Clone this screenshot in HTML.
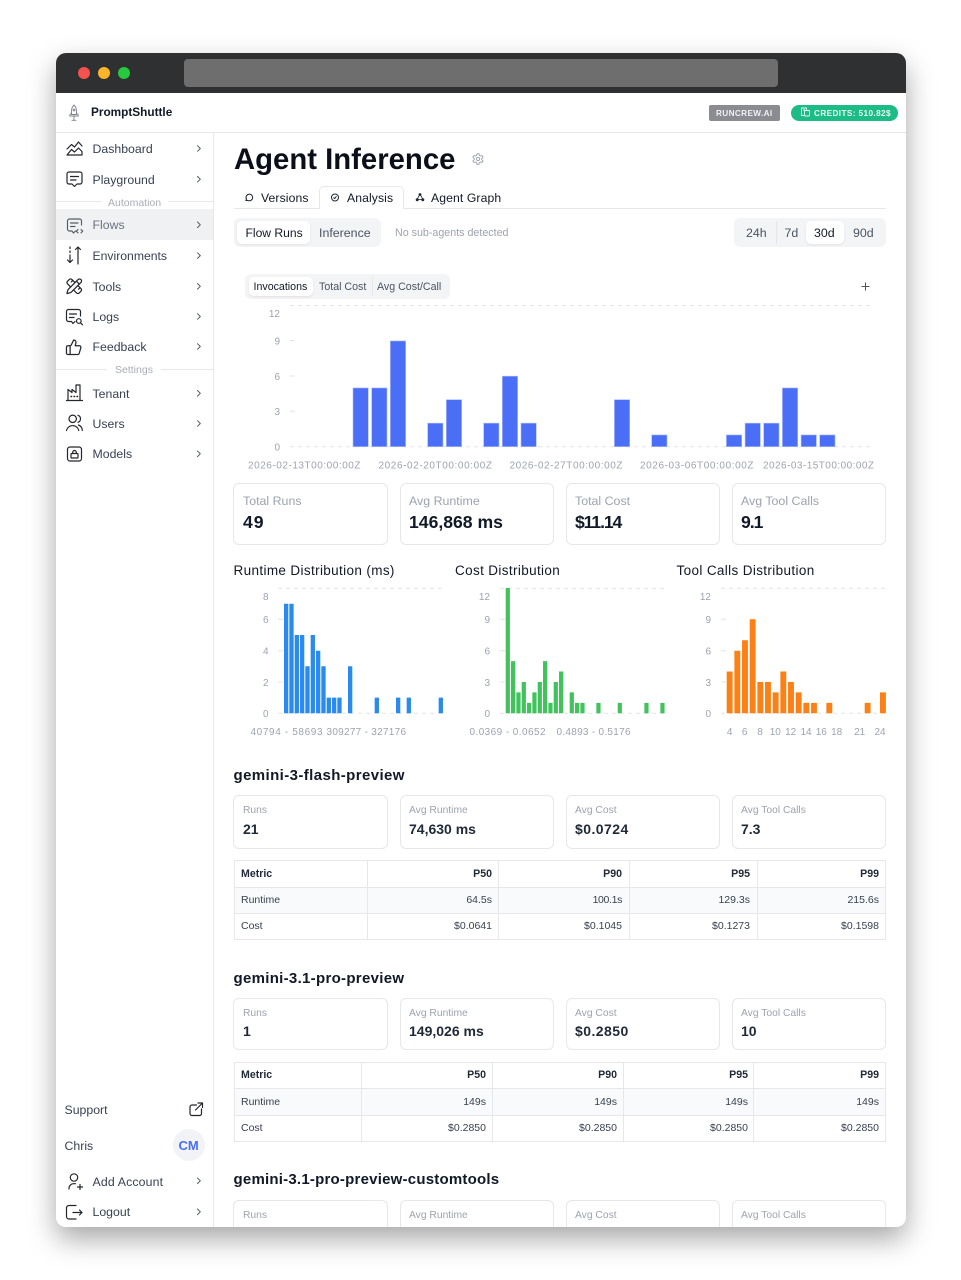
<!DOCTYPE html>
<html lang="en">
<head>
<meta charset="utf-8">
<title>Agent Inference</title>
<style>
*{box-sizing:border-box;margin:0;padding:0}
html,body{width:961px;height:1280px;background:#fff;overflow:hidden;font-family:"Liberation Sans",sans-serif}
#win{position:absolute;left:56px;top:53px;width:850px;height:1174px;border-radius:10px;overflow:hidden;background:#fff}
#shadow{position:absolute;left:56px;top:53px;width:850px;height:1174px;border-radius:10px;box-shadow:0 12px 28px rgba(0,0,0,.35)}
#in{position:absolute;left:-56px;top:-53px;width:961px;height:1280px}
.b{position:absolute}
.t{position:absolute;white-space:nowrap;line-height:16px;height:16px}
.nav{font-size:12.3px;color:#374151}
.card{position:absolute;background:#fff;border:1px solid #e5e7eb;border-radius:6px;width:154px}
.lg{font-size:12.4px;color:#9ca3af}
.vl{font-size:17.6px;font-weight:700;color:#111827}
.ls{font-size:10.3px;color:#9ca3af}
.vs{font-size:14px;font-weight:700;color:#1f2937}
.h2{font-size:15px;font-weight:700;color:#111827}
.h3{font-size:13.5px;color:#111827;letter-spacing:.36px}
.th{font-size:10.6px;font-weight:700;color:#1f2937}
.td{font-size:10.5px;color:#374151}
.sep{font-size:10.5px;color:#a8adb5}
.line{position:absolute;background:#e5e7eb}
svg.o{position:absolute;left:0;top:0}
svg text{font-family:"Liberation Sans",sans-serif;fill:#9ca3af}
</style>
</head>
<body>
<div id="shadow"></div>
<div id="win"><div id="in">
  <!-- title bar -->
  <div class="b" style="left:56px;top:53px;width:850px;height:40px;background:#2f3032"></div>
  <div class="b" style="left:184px;top:59px;width:594px;height:28px;border-radius:4px;background:#6e6e6e"></div>
  <div class="b" style="left:78px;top:67px;width:12px;height:12px;border-radius:50%;background:#f4524d"></div>
  <div class="b" style="left:98px;top:67px;width:12px;height:12px;border-radius:50%;background:#fdb32a"></div>
  <div class="b" style="left:118px;top:67px;width:12px;height:12px;border-radius:50%;background:#27c93f"></div>

  <!-- header -->
  <div class="line" style="left:56px;top:132px;width:850px;height:1px"></div>
  <div class="line" style="left:213px;top:133px;width:1px;height:1094px"></div>
  <div class="t" style="left:91px;top:104px;font-size:11.8px;font-weight:700;color:#111827">PromptShuttle</div>
  <div class="b" style="left:709px;top:105px;width:71px;height:16px;border-radius:2px;background:#8a8c91"></div>
  <div class="t" style="left:716px;top:106px;font-size:8.2px;font-weight:700;color:#eef0f2;letter-spacing:.38px">RUNCREW.AI</div>
  <div class="b" style="left:791px;top:105px;width:107px;height:15.5px;border-radius:8px;background:#1dbb85"></div>
  <div class="t" style="left:814px;top:105.5px;font-size:8.2px;font-weight:700;color:#e9fbf4;letter-spacing:.4px">CREDITS: 510.82$</div>

  <!-- sidebar -->
  <div class="b" style="left:56px;top:209px;width:157px;height:31px;background:#f0f1f3"></div>
  <div class="t nav" style="left:92.5px;top:141px">Dashboard</div>
  <div class="t nav" style="left:92.5px;top:172px">Playground</div>
  <div class="line" style="left:56px;top:201px;width:45px;height:1px"></div>
  <div class="line" style="left:168px;top:201px;width:45px;height:1px"></div>
  <div class="t sep" style="left:108px;top:194.5px">Automation</div>
  <div class="t nav" style="left:92.5px;top:217px;color:#6b7280">Flows</div>
  <div class="t nav" style="left:92.5px;top:248px;font-size:12.2px">Environments</div>
  <div class="t nav" style="left:92.5px;top:279px">Tools</div>
  <div class="t nav" style="left:92.5px;top:309px">Logs</div>
  <div class="t nav" style="left:92.5px;top:339px">Feedback</div>
  <div class="line" style="left:56px;top:369px;width:51px;height:1px"></div>
  <div class="line" style="left:161px;top:369px;width:52px;height:1px"></div>
  <div class="t sep" style="left:115px;top:362px">Settings</div>
  <div class="t nav" style="left:92.5px;top:386px">Tenant</div>
  <div class="t nav" style="left:92.5px;top:416px">Users</div>
  <div class="t nav" style="left:92.5px;top:446px">Models</div>
  <div class="t nav" style="left:64.5px;top:1102px">Support</div>
  <div class="t nav" style="left:64.5px;top:1138px">Chris</div>
  <div class="b" style="left:173px;top:1129px;width:32px;height:32px;border-radius:50%;background:#f1f3f6"></div>
  <div class="t" style="left:178.5px;top:1137.5px;font-size:13px;font-weight:700;color:#4a6ef5">CM</div>
  <div class="t nav" style="left:92.5px;top:1173.5px;letter-spacing:.15px">Add Account</div>
  <div class="t nav" style="left:92.5px;top:1204px">Logout</div>

  <!-- title & tabs -->
  <div class="t" style="left:234px;top:143px;height:34px;line-height:34px;font-size:29.3px;font-weight:700;color:#0b0f19">Agent Inference</div>
  <div class="line" style="left:234px;top:208px;width:652px;height:1px"></div>
  <div class="b" style="left:319px;top:186px;width:85px;height:23px;background:#fff;border:1px solid #e5e7eb;border-bottom:0;border-radius:5px 5px 0 0"></div>
  <div class="t h3" style="left:261px;top:190px;font-size:12.2px;letter-spacing:.1px">Versions</div>
  <div class="t h3" style="left:347px;top:190px;font-size:12.2px;letter-spacing:.1px">Analysis</div>
  <div class="t h3" style="left:431px;top:190px;font-size:12.2px;letter-spacing:.1px">Agent Graph</div>

  <div class="b" style="left:234px;top:218px;width:147px;height:29px;border-radius:6px;background:#f3f4f6"></div>
  <div class="b" style="left:237px;top:221px;width:73px;height:23px;border-radius:5px;background:#fff;box-shadow:0 1px 2px rgba(0,0,0,.08)"></div>
  <div class="t" style="left:245.5px;top:224.5px;font-size:12.1px;color:#111827">Flow Runs</div>
  <div class="t" style="left:319px;top:224.5px;font-size:12.4px;color:#4b5563">Inference</div>
  <div class="t" style="left:395px;top:224.5px;font-size:10.7px;color:#9ca3af">No sub-agents detected</div>

  <div class="b" style="left:734px;top:218px;width:152px;height:29px;border-radius:6px;background:#f3f4f6"></div>
  <div class="b" style="left:776px;top:221px;width:1px;height:23px;background:#e5e7eb"></div>
  <div class="b" style="left:806px;top:221px;width:38px;height:23px;border-radius:5px;background:#fff;box-shadow:0 1px 2px rgba(0,0,0,.08)"></div>
  <div class="t" style="left:746px;top:224.5px;font-size:12.4px;color:#4b5563">24h</div>
  <div class="t" style="left:784.5px;top:224.5px;font-size:12.4px;color:#4b5563">7d</div>
  <div class="t" style="left:814px;top:224.5px;font-size:12.4px;color:#111827">30d</div>
  <div class="t" style="left:853px;top:224.5px;font-size:12.4px;color:#4b5563">90d</div>

  <!-- chart switch -->
  <div class="b" style="left:245px;top:274px;width:205px;height:25px;border-radius:6px;background:#f3f4f6"></div>
  <div class="b" style="left:249px;top:277px;width:64px;height:19px;border-radius:5px;background:#fff;box-shadow:0 1px 2px rgba(0,0,0,.08)"></div>
  <div class="b" style="left:371.5px;top:277px;width:1px;height:19px;background:#e5e7eb"></div>
  <div class="t" style="left:253.5px;top:278.5px;font-size:10.65px;color:#111827">Invocations</div>
  <div class="t" style="left:319px;top:278.5px;font-size:10.65px;color:#4b5563">Total Cost</div>
  <div class="t" style="left:377px;top:278.5px;font-size:10.65px;color:#4b5563">Avg Cost/Call</div>

  <!-- stat cards -->
  <div class="card" style="left:233px;top:483px;height:62px;width:155px"></div>
  <div class="card" style="left:400px;top:483px;height:62px"></div>
  <div class="card" style="left:566px;top:483px;height:62px"></div>
  <div class="card" style="left:732px;top:483px;height:62px"></div>
  <div class="t lg" style="left:243px;top:493px">Total Runs</div>
  <div class="t lg" style="left:409px;top:493px">Avg Runtime</div>
  <div class="t lg" style="left:575px;top:493px">Total Cost</div>
  <div class="t lg" style="left:741px;top:493px">Avg Tool Calls</div>
  <div class="t vl" style="left:243px;top:513.5px;letter-spacing:1px">49</div>
  <div class="t vl" style="left:409px;top:513.5px">146,868 ms</div>
  <div class="t vl" style="left:575px;top:513.5px;letter-spacing:-1.1px">$11.14</div>
  <div class="t vl" style="left:741px;top:513.5px;letter-spacing:-1px">9.1</div>

  <div class="t h3" style="left:233.5px;top:562.5px">Runtime Distribution (ms)</div>
  <div class="t h3" style="left:455px;top:562.5px">Cost Distribution</div>
  <div class="t h3" style="left:676.5px;top:562.5px">Tool Calls Distribution</div>

  <!-- gemini-3-flash -->
  <div class="t h2" style="left:233.5px;top:768px;letter-spacing:.4px">gemini-3-flash-preview</div>
  <div class="card" style="left:233px;top:795px;height:54px;width:155px"></div>
  <div class="card" style="left:400px;top:795px;height:54px"></div>
  <div class="card" style="left:566px;top:795px;height:54px"></div>
  <div class="card" style="left:732px;top:795px;height:54px"></div>
  <div class="t ls" style="left:243px;top:803px">Runs</div>
  <div class="t ls" style="left:409px;top:803px">Avg Runtime</div>
  <div class="t ls" style="left:575px;top:803px">Avg Cost</div>
  <div class="t ls" style="left:741px;top:803px">Avg Tool Calls</div>
  <div class="t vs" style="left:243px;top:820.5px">21</div>
  <div class="t vs" style="left:409px;top:820.5px">74,630 ms</div>
  <div class="t vs" style="left:575px;top:820.5px;letter-spacing:.45px">$0.0724</div>
  <div class="t vs" style="left:741px;top:820.5px">7.3</div>

  <div class="b" style="left:234px;top:887px;width:652px;height:26px;background:#f9fafb"></div>
  <div class="b" style="left:233.5px;top:860px;width:652.5px;height:80px;border:1px solid #e5e7eb"></div>
  <div class="line" style="left:234px;top:887px;width:652px;height:1px"></div>
  <div class="line" style="left:234px;top:912.5px;width:652px;height:1px"></div>
  <div class="line" style="left:367px;top:860px;width:1px;height:80px"></div>
  <div class="line" style="left:498px;top:860px;width:1px;height:80px"></div>
  <div class="line" style="left:629px;top:860px;width:1px;height:80px"></div>
  <div class="line" style="left:757px;top:860px;width:1px;height:80px"></div>
  <div class="t th" style="left:241px;top:865.5px">Metric</div>
  <div class="t th" style="right:469px;top:865.5px">P50</div>
  <div class="t th" style="right:339px;top:865.5px">P90</div>
  <div class="t th" style="right:211px;top:865.5px">P95</div>
  <div class="t th" style="right:82px;top:865.5px">P99</div>
  <div class="t td" style="left:241px;top:891.5px">Runtime</div>
  <div class="t td" style="right:469px;top:891.5px">64.5s</div>
  <div class="t td" style="right:339px;top:891.5px;letter-spacing:-.35px">100.1s</div>
  <div class="t td" style="right:211px;top:891.5px">129.3s</div>
  <div class="t td" style="right:82px;top:891.5px">215.6s</div>
  <div class="t td" style="left:241px;top:917.5px">Cost</div>
  <div class="t td" style="right:469px;top:917.5px">$0.0641</div>
  <div class="t td" style="right:339px;top:917.5px">$0.1045</div>
  <div class="t td" style="right:211px;top:917.5px">$0.1273</div>
  <div class="t td" style="right:82px;top:917.5px">$0.1598</div>

  <!-- gemini-3.1-pro -->
  <div class="t h2" style="left:233.5px;top:970.5px;letter-spacing:.3px">gemini-3.1-pro-preview</div>
  <div class="card" style="left:233px;top:998px;height:52px;width:155px"></div>
  <div class="card" style="left:400px;top:998px;height:52px"></div>
  <div class="card" style="left:566px;top:998px;height:52px"></div>
  <div class="card" style="left:732px;top:998px;height:52px"></div>
  <div class="t ls" style="left:243px;top:1006px">Runs</div>
  <div class="t ls" style="left:409px;top:1006px">Avg Runtime</div>
  <div class="t ls" style="left:575px;top:1006px">Avg Cost</div>
  <div class="t ls" style="left:741px;top:1006px">Avg Tool Calls</div>
  <div class="t vs" style="left:243px;top:1023px">1</div>
  <div class="t vs" style="left:409px;top:1023px">149,026 ms</div>
  <div class="t vs" style="left:575px;top:1023px;letter-spacing:.45px">$0.2850</div>
  <div class="t vs" style="left:741px;top:1023px">10</div>

  <div class="b" style="left:234px;top:1088px;width:652px;height:27px;background:#f9fafb"></div>
  <div class="b" style="left:233.5px;top:1062px;width:652.5px;height:79.5px;border:1px solid #e5e7eb"></div>
  <div class="line" style="left:234px;top:1088px;width:652px;height:1px"></div>
  <div class="line" style="left:234px;top:1115px;width:652px;height:1px"></div>
  <div class="line" style="left:361px;top:1062px;width:1px;height:79px"></div>
  <div class="line" style="left:492px;top:1062px;width:1px;height:79px"></div>
  <div class="line" style="left:623px;top:1062px;width:1px;height:79px"></div>
  <div class="line" style="left:753px;top:1062px;width:1px;height:79px"></div>
  <div class="t th" style="left:241px;top:1067px">Metric</div>
  <div class="t th" style="right:475px;top:1067px">P50</div>
  <div class="t th" style="right:344px;top:1067px">P90</div>
  <div class="t th" style="right:213px;top:1067px">P95</div>
  <div class="t th" style="right:82px;top:1067px">P99</div>
  <div class="t td" style="left:241px;top:1093.5px">Runtime</div>
  <div class="t td" style="right:475px;top:1093.5px">149s</div>
  <div class="t td" style="right:344px;top:1093.5px">149s</div>
  <div class="t td" style="right:213px;top:1093.5px">149s</div>
  <div class="t td" style="right:82px;top:1093.5px">149s</div>
  <div class="t td" style="left:241px;top:1120px">Cost</div>
  <div class="t td" style="right:475px;top:1120px">$0.2850</div>
  <div class="t td" style="right:344px;top:1120px">$0.2850</div>
  <div class="t td" style="right:213px;top:1120px">$0.2850</div>
  <div class="t td" style="right:82px;top:1120px">$0.2850</div>

  <!-- gemini custom tools -->
  <div class="t h2" style="left:233.5px;top:1172px;letter-spacing:.22px">gemini-3.1-pro-preview-customtools</div>
  <div class="card" style="left:233px;top:1200px;height:52px;width:155px"></div>
  <div class="card" style="left:400px;top:1200px;height:52px"></div>
  <div class="card" style="left:566px;top:1200px;height:52px"></div>
  <div class="card" style="left:732px;top:1200px;height:52px"></div>
  <div class="t ls" style="left:243px;top:1208px">Runs</div>
  <div class="t ls" style="left:409px;top:1208px">Avg Runtime</div>
  <div class="t ls" style="left:575px;top:1208px">Avg Cost</div>
  <div class="t ls" style="left:741px;top:1208px">Avg Tool Calls</div>

  <!-- all graphics, page coords -->
  <svg class="o" width="961" height="1280" viewBox="0 0 961 1280">
    <!-- chart grids -->
    <g stroke="#e2e4e8" stroke-width="1" stroke-dasharray="4 4" fill="none">
      <path d="M290 305.5H874M290 446.7H874M278 588.3H446M278 713.3H446M500 588.3H668M500 713.3H668M721 588.3H888M721 713.3H888"/>
    </g>
    <g stroke="#e2e4e8" fill="none">
      <path d="M290 340.5h5M290 376h5M290 411.3h5M278 619.3h5M278 650.7h5M278 682h5M500 619.3h5M500 650.7h5M500 682h5M721 619.3h5M721 650.7h5M721 682h5"/>
    </g>
    <path fill="#4a6ef5" stroke="#a9bbfb" stroke-width=".6" d="M353 446.7v-58.75h15.3v58.75zM371.67 446.7v-58.75h15.3v58.75zM390.33 446.7v-105.75h15.3v105.75zM427.67 446.7v-23.5h15.3v23.5zM446.33 446.7v-47h15.3v47zM483.67 446.7v-23.5h15.3v23.5zM502.33 446.7v-70.5h15.3v70.5zM521 446.7v-23.5h15.3v23.5zM614.4 446.7v-47h15.3v47zM651.7 446.7v-11.75h15.3v11.75zM726.4 446.7v-11.75h15.3v11.75zM745.07 446.7v-23.5h15.3v23.5zM763.7 446.7v-23.5h15.3v23.5zM782.4 446.7v-58.75h15.3v58.75zM801.1 446.7v-11.75h15.3v11.75zM819.7 446.7v-11.75h15.3v11.75z"/>
    <path fill="#2a8bec" d="M284 713.3v-109.6h4.3v109.6zM289.33 713.3v-109.6h4.3v109.6zM294.67 713.3v-78.3h4.3v78.3zM300 713.3v-78.3h4.3v78.3zM305.33 713.3v-47h4.3v47zM310.67 713.3v-78.3h4.3v78.3zM316 713.3v-62.6h4.3v62.6zM321.33 713.3v-47h4.3v47zM326.67 713.3v-15.65h4.3v15.65zM332 713.3v-15.65h4.3v15.65zM337.33 713.3v-15.65h4.3v15.65zM348 713.3v-47h4.3v47zM374.67 713.3v-15.65h4.3v15.65zM396 713.3v-15.65h4.3v15.65zM406.67 713.3v-15.65h4.3v15.65zM438.67 713.3v-15.65h4.3v15.65z"/>
    <path fill="#3fc35a" d="M505.7 713.3v-125.3h4.2v125.3zM511.03 713.3v-52.2h4.2v52.2zM516.37 713.3v-20.9h4.2v20.9zM521.7 713.3v-31.3h4.2v31.3zM527.03 713.3v-10.4h4.2v10.4zM532.37 713.3v-20.9h4.2v20.9zM537.7 713.3v-31.3h4.2v31.3zM543.03 713.3v-52.2h4.2v52.2zM548.37 713.3v-10.4h4.2v10.4zM553.7 713.3v-31.3h4.2v31.3zM559.03 713.3v-41.8h4.2v41.8zM569.7 713.3v-20.9h4.2v20.9zM575.03 713.3v-10.4h4.2v10.4zM580.37 713.3v-10.4h4.2v10.4zM596.37 713.3v-10.4h4.2v10.4zM617.7 713.3v-10.4h4.2v10.4zM644.37 713.3v-10.4h4.2v10.4zM660.37 713.3v-10.4h4.2v10.4z"/>
    <path fill="#fb8117" d="M726.7 713.3v-41.8h5.9v41.8zM734.37 713.3v-62.6h5.9v62.6zM742.03 713.3v-73.1h5.9v73.1zM749.7 713.3v-94h5.9v94zM757.37 713.3v-31.3h5.9v31.3zM765.03 713.3v-31.3h5.9v31.3zM772.7 713.3v-20.9h5.9v20.9zM780.37 713.3v-41.8h5.9v41.8zM788.03 713.3v-31.3h5.9v31.3zM795.7 713.3v-20.9h5.9v20.9zM803.37 713.3v-10.4h5.9v10.4zM811.03 713.3v-10.4h5.9v10.4zM826.37 713.3v-10.4h5.9v10.4zM864.7 713.3v-10.4h5.9v10.4zM880 713.3v-20.9h5.9v20.9z"/>

    <!-- axis labels -->
    <g font-size="10" text-anchor="end">
      <text x="280" y="317">12</text><text x="280" y="344.5">9</text><text x="280" y="380">6</text><text x="280" y="415">3</text><text x="280" y="450.5">0</text>
      <text x="268.5" y="600">8</text><text x="268.5" y="623">6</text><text x="268.5" y="654.5">4</text><text x="268.5" y="686">2</text><text x="268.5" y="717">0</text>
      <text x="490" y="600">12</text><text x="490" y="623">9</text><text x="490" y="654.5">6</text><text x="490" y="686">3</text><text x="490" y="717">0</text>
      <text x="711" y="600">12</text><text x="711" y="623">9</text><text x="711" y="654.5">6</text><text x="711" y="686">3</text><text x="711" y="717">0</text>
    </g>
    <g font-size="10">
      <text x="248" y="468.5" textLength="112.5">2026-02-13T00:00:00Z</text>
      <text x="378.5" y="468.5" textLength="113.5">2026-02-20T00:00:00Z</text>
      <text x="509.5" y="468.5" textLength="113">2026-02-27T00:00:00Z</text>
      <text x="640" y="468.5" textLength="113.5">2026-03-06T00:00:00Z</text>
      <text x="763" y="468.5" textLength="111">2026-03-15T00:00:00Z</text>
      <text x="250.5" y="735" textLength="72">40794 - 58693</text>
      <text x="326.5" y="735" textLength="79.5">309277 - 327176</text>
      <text x="469.5" y="735" textLength="76">0.0369 - 0.0652</text>
      <text x="556.5" y="735" textLength="74">0.4893 - 0.5176</text>
    </g>
    <g font-size="10" text-anchor="middle">
      <text x="729.7" y="735">4</text><text x="744.7" y="735">6</text><text x="760" y="735">8</text><text x="775.3" y="735">10</text><text x="790.7" y="735">12</text><text x="806" y="735">14</text><text x="821.3" y="735">16</text><text x="836.7" y="735">18</text><text x="859.7" y="735">21</text><text x="880" y="735">24</text>
    </g>

    <!-- plus -->
    <path d="M865.5 282.5v8M861.5 286.5h8" stroke="#4b5563" stroke-width="1" fill="none"/>

    <!-- chevrons -->
    <g fill="none" stroke="#555b66" stroke-width="1" stroke-linecap="round" stroke-linejoin="round">
      <path d="M197.5 145.7l2.8 2.8-2.8 2.8M197.5 176.4l2.8 2.8-2.8 2.8M197.5 222l2.8 2.8-2.8 2.8M197.5 252.8l2.8 2.8-2.8 2.8M197.5 283.5l2.8 2.8-2.8 2.8M197.5 313.7l2.8 2.8-2.8 2.8M197.5 343.7l2.8 2.8-2.8 2.8M197.5 390.5l2.8 2.8-2.8 2.8M197.5 420.7l2.8 2.8-2.8 2.8M197.5 451l2.8 2.8-2.8 2.8M197.5 1178l2.8 2.8-2.8 2.8M197.5 1209l2.8 2.8-2.8 2.8"/>
    </g>

    <!-- sidebar icons -->
    <g fill="none" stroke="#23262c" stroke-width="1.2" stroke-linecap="round" stroke-linejoin="round">
      <!-- dashboard -->
      <path d="M67 149l4.5-4.5 3 2.5 4-5 3.5 4"/>
      <path d="M67 155l4.5-5.5 3 2.5 4-4 3.5 3.5V155z"/>
      <!-- playground -->
      <path d="M69 172h11a2 2 0 0 1 2 2v8a2 2 0 0 1-2 2h-3l-2.5 2.5-2.500-2.500h-3a2 2 0 0 1-2-2v-8a2 2 0 0 1 2-2z"/>
      <path d="M70.5 176.500h8M70.500 180h5.500"/>
      <!-- environments -->
      <path d="M70 247v1.500M70 251v1.500M70 255v7.500M67.500 260l2.500 2.500 2.500-2.500M78 264v-17M75.500 249.500l2.500-2.500 2.500 2.500"/>
      <!-- tools -->
      <svg x="65.500" y="277.500" width="17.500" height="17.500" viewBox="0 0 24 24" stroke-width="1.700">
        <path d="M13 7 8.700 2.700a2.410 2.410 0 0 0-3.400 0L2.700 5.300a2.410 2.410 0 0 0 0 3.400L7 13"/>
        <path d="m8 6 2-2m8 12 2-2"/>
        <path d="m17 11 4.300 4.300c.94.94.94 2.460 0 3.400l-2.600 2.600c-.94.94-2.460.94-3.400 0L11 17"/>
        <path d="M21.174 6.812a1 1 0 0 0-3.986-3.987L3.842 16.174a2 2 0 0 0-.5.83l-1.321 4.352a.5.5 0 0 0 .623.622l4.353-1.320a2 2 0 0 0 .83-.497z"/>
        <path d="m15 5 4 4"/>
      </svg>
      <!-- logs -->
      <path d="M80.500 316v-4.500a2 2 0 0 0-2-2h-10a2 2 0 0 0-2 2v8a2 2 0 0 0 2 2h3l1.500 2 2-2"/>
      <path d="M69.500 314h7M69.500 317.500h4.500"/>
      <circle cx="78.800" cy="321" r="2.300"/><path d="M80.500 322.800l2 2"/>
      <!-- feedback -->
      <svg x="65" y="338.500" width="17.500" height="17.500" viewBox="0 0 24 24" stroke-width="1.700">
        <path d="M7 10v12"/>
        <path d="M15 5.880 14 10h5.830a2 2 0 0 1 1.920 2.560l-2.330 8A2 2 0 0 1 17.500 22H4a2 2 0 0 1-2-2v-8a2 2 0 0 1 2-2h2.760a2 2 0 0 0 1.790-1.110L12 2a3.130 3.130 0 0 1 3 3.880Z"/>
      </svg>
      <!-- tenant -->
      <path d="M66.500 400.500h16M68 400v-10.500l4 3v-3l4 3v-7.500h4v15"/>
      <path d="M71 396.500h.6M74 396.500h.6M77 396.500h.6" stroke-width="1.400"/>
      <!-- users -->
      <circle cx="72.700" cy="418.800" r="3.700"/>
      <path d="M78 415.300a3.700 3.700 0 0 1 0 7M66.500 430.500a6.300 6.300 0 0 1 12.300 0M78.500 425a5.500 5.500 0 0 1 3.800 5.500"/>
      <!-- models -->
      <rect x="67.500" y="447" width="14" height="14" rx="2.500"/>
      <rect x="71" y="453.500" width="7" height="4.500" rx=".8"/>
      <path d="M72.700 453.500v-1.200a1.800 1.800 0 0 1 3.600 0v1.200"/>
      <!-- external -->
      <path d="M196.500 1105h-4.500a2 2 0 0 0-2 2v6.500a2 2 0 0 0 2 2h7.500a2 2 0 0 0 2-2v-4.500M195.500 1110l7-7M198 1103h4.500v4.500"/>
      <!-- add account -->
      <circle cx="74" cy="1177.500" r="3.700"/>
      <path d="M69 1189v-.8a4.500 4.500 0 0 1 4.500-4.500h2M80 1184.500v5M77.500 1187h5"/>
      <!-- logout -->
      <path d="M76 1205.500h-7a2.500 2.500 0 0 0-2.500 2.500v8.500a2.500 2.500 0 0 0 2.500 2.500h7M73 1212.500h9M79.500 1210l2.500 2.500-2.500 2.500"/>
    </g>
    <!-- flows icon, dimmed -->
    <g fill="none" stroke="#555b66" stroke-width="1.150" stroke-linecap="round" stroke-linejoin="round">
      <path d="M81.500 225v-4a2 2 0 0 0-2-2h-10a2 2 0 0 0-2 2v8a2 2 0 0 0 2 2h2.500l1.500 2 2-2"/>
      <path d="M70.500 223h7.500M70.500 226.500h4.500"/>
      <path d="M78 229.500l-1.700 1.700 1.700 1.700M81 229.500l1.700 1.700-1.700 1.700"/>
    </g>
    <!-- logo -->
    <g fill="none" stroke="#7b8089" stroke-width=".9" stroke-linecap="round" stroke-linejoin="round">
      <path d="M74 105c1.800 1.800 2.500 3.800 2.500 6v3.500h-5V111c0-2.200.7-4.200 2.500-6z"/>
      <path d="M71.500 113l-1.800 2v1h8.600v-1l-1.800-2M74 116v4M72 120.300h4"/>
      <circle cx="74" cy="110" r=".9"/>
    </g>
    <!-- gear -->
    <svg x="471.500" y="152.500" width="13" height="13" viewBox="0 0 24 24" fill="none" stroke="#9ca3af" stroke-width="1.800" stroke-linecap="round" stroke-linejoin="round">
      <path d="M12.220 2h-.44a2 2 0 0 0-2 2v.18a2 2 0 0 1-1 1.730l-.43.25a2 2 0 0 1-2 0l-.15-.08a2 2 0 0 0-2.730.73l-.22.38a2 2 0 0 0 .73 2.730l.15.1a2 2 0 0 1 1 1.720v.51a2 2 0 0 1-1 1.740l-.15.09a2 2 0 0 0-.73 2.730l.22.38a2 2 0 0 0 2.730.73l.15-.08a2 2 0 0 1 2 0l.43.25a2 2 0 0 1 1 1.730V20a2 2 0 0 0 2 2h.44a2 2 0 0 0 2-2v-.18a2 2 0 0 1 1-1.730l.43-.25a2 2 0 0 1 2 0l.15.08a2 2 0 0 0 2.730-.73l.22-.39a2 2 0 0 0-.73-2.730l-.15-.08a2 2 0 0 1-1-1.740v-.5a2 2 0 0 1 1-1.740l.15-.09a2 2 0 0 0 .73-2.730l-.22-.38a2 2 0 0 0-2.730-.73l-.15.08a2 2 0 0 1-2 0l-.43-.25a2 2 0 0 1-1-1.730V4a2 2 0 0 0-2-2z"/>
      <circle cx="12" cy="12" r="3"/>
    </svg>
    <!-- tab icons -->
    <g fill="none" stroke="#1f2937" stroke-width="1" stroke-linecap="round" stroke-linejoin="round">
      <path d="M245.800 200.500l.7-1.300a3.300 3.300 0 1 1 1.300 1.200z"/>
      <circle cx="335" cy="197.500" r="3.500"/>
      <path d="M333.700 197.800l1 .8 1.500-2"/>
    </g>
    <g fill="#1f2937">
      <circle cx="420" cy="194.500" r="1.400"/><circle cx="417.200" cy="199.800" r="1.500"/><circle cx="422.800" cy="199.800" r="1.500"/>
      <path d="M419.500 195l-2.500 4.500h6l-2.500-4.500z" fill="none" stroke="#1f2937" stroke-width=".8"/>
    </g>
    <!-- credit icon -->
    <g fill="none" stroke="#eafbf5" stroke-width=".9" stroke-linejoin="round">
      <path d="M804 115.500h-2.500v-7.500h5v2.500"/>
      <rect x="804.500" y="110.500" width="5" height="5.500" rx="1"/>
      <path d="M803 110h2"/>
    </g>
  </svg>
</div></div>
</body>
</html>
